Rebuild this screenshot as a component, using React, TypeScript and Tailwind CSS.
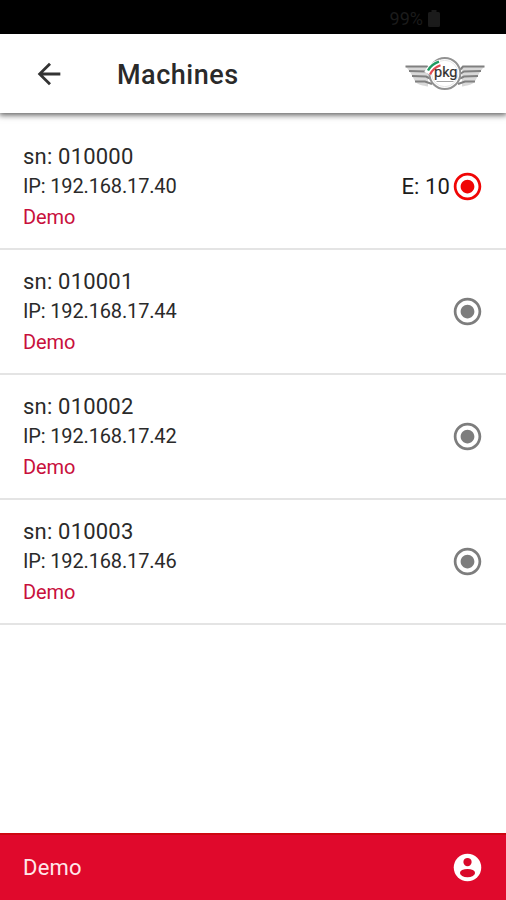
const machines = [
  { sn: "010000", ip: "192.168.17.40", owner: "Demo", error: "10" },
  { sn: "010001", ip: "192.168.17.44", owner: "Demo" },
  { sn: "010002", ip: "192.168.17.42", owner: "Demo" },
  { sn: "010003", ip: "192.168.17.46", owner: "Demo" },
];

function Logo() {
  return (
    <svg className="block" width="80" height="36" viewBox="0 0 80 36" fill="none">
      <path d="M0.500 10.500H23V30.500C18 29.500 13 29 10.500 26C8 22 6 16 0.500 10.500Z" fill="#d8d8d8" />
      <path d="M79.500 10.500H57V30.500C62 29.500 67 29 69.500 26C72 22 74 16 79.500 10.500Z" fill="#d8d8d8" />
      <path
        d="M0.500 10.500H22L25 14M4 15L21 15.500L25 18M7 20L21 20.500L25 22.500M10 25.500L20 25.500L27 28M79.500 10.500H58L55 14M76 15L59 15.500L55 18M73 20L59 20.500L55 22.500M70 25.500L60 25.500L53 28"
        stroke="#808080"
        strokeWidth="2"
      />
      <circle cx="39.800" cy="17.500" r="15.500" fill="#fff" stroke="#929292" strokeWidth="2" />
      <circle cx="39.800" cy="17.500" r="13.200" stroke="#dedede" strokeWidth="0.800" />
      <path d="M22.500 17.500C25.500 11 29.500 8.500 35.500 7" stroke="#fff" strokeWidth="7" />
      <path d="M23 14.500C25.500 10 28.500 7.500 34 5.700" stroke="#1f9a61" strokeWidth="2.400" />
      <path d="M25 18.500C27.500 13.500 30.500 11 35.500 9.300" stroke="#e04a52" strokeWidth="2.200" />
      <text x="29" y="20.500" fontSize="14" fill="#303030" stroke="#303030" strokeWidth="0.200" textLength="23.500" lengthAdjust="spacingAndGlyphs">
        pkg
      </text>
      <path d="M31.500 25.500H48.500" stroke="#a5a5a5" strokeWidth="1" />
    </svg>
  );
}

function StatusBar() {
  return (
    <div className="flex h-[34px] shrink-0 items-center justify-end bg-black pt-[3px] pr-[66px] text-[#1b1b1b]">
      <span className="text-[18px] leading-none">99%</span>
      <svg className="ml-[5px]" width="12" height="17" viewBox="0 0 12 17" fill="currentColor">
        <path d="M3.500 0H8.500V2H10.500Q12 2 12 3.500V15.500Q12 17 10.500 17H1.500Q0 17 0 15.500V3.500Q0 2 1.500 2H3.500Z" />
      </svg>
    </div>
  );
}

function RadioIcon({ className }: { className: string }) {
  return (
    <svg className={className} width="33" height="33" viewBox="0 0 24 24" fill="currentColor">
      <path d="M12 7c-2.760 0-5 2.240-5 5s2.240 5 5 5 5-2.240 5-5-2.240-5-5-5zm0-5C6.480 2 2 6.480 2 12s4.480 10 10 10 10-4.480 10-10S17.520 2 12 2zm0 18c-4.420 0-8-3.580-8-8s3.580-8 8-8 8 3.580 8 8-3.580 8-8 8z" />
    </svg>
  );
}

function MachineRow({ machine }: { machine: any }) {
  const { sn, ip, owner, error } = machine;

  return (
    <li className="flex h-[125px] items-center justify-between border-b-2 border-[#e4e4e4] pr-[22px] pl-[23px]">
      <div className="pt-px">
        <p className="text-[22px] leading-[29px] tracking-[0.2px] text-[#2a2a2a]">sn: {sn}</p>
        <p className="text-[20px] leading-[30px] tracking-[-0.15px] text-[#2a2a2a]">IP: {ip}</p>
        <p className="text-[20px] leading-[32px] tracking-[-0.1px] text-[#c8103c]">{owner}</p>
      </div>
      <div className="flex items-center">
        {error && <span className="mr-px text-[22px] leading-none tracking-[0.1px] text-[#1c1c1c]">E: {error}</span>}
        <RadioIcon className={error ? "text-[#f00505]" : "text-[#7d7d7d]"} />
      </div>
    </li>
  );
}

export default function App() {
  return (
    <div className="flex h-screen flex-col overflow-hidden bg-white font-['Roboto',sans-serif]">
      <StatusBar />
      <header className="z-10 flex h-[79px] shrink-0 items-center bg-white pt-px pr-[21px] pl-[32px] shadow-[0_1px_6px_1px_rgba(0,0,0,0.65)]">
        <svg width="34" height="34" viewBox="0 0 24 24" fill="#333">
          <path d="M20 11H7.830l5.590-5.590L12 4l-8 8 8 8 1.410-1.410L7.830 13H20v-2z" />
        </svg>
        <h1 className="ml-[51px] flex-1 pt-[2px] text-[27px] leading-none font-medium tracking-[0.5px] text-[#2a2a2a]">
          Machines
        </h1>
        <Logo />
      </header>

      <ul className="flex-1 pt-[12px]">
        {machines.map((machine) => (
          <MachineRow key={machine.sn} machine={machine} />
        ))}
      </ul>

      <footer className="flex h-[67px] shrink-0 items-center justify-between border-t-2 border-[#cd0712] bg-[#e0092c] pr-[22px] pl-[23px]">
        <span className="text-[22px] leading-none tracking-[0.2px] text-[#ffe6ea]">Demo</span>
        <svg width="33" height="33" viewBox="0 0 24 24">
          <circle cx="12" cy="12" r="10" fill="#fff" />
          <circle cx="12" cy="8" r="3" fill="#d9082a" />
          <ellipse cx="12" cy="16" rx="5.500" ry="3" fill="#d9082a" />
        </svg>
      </footer>
    </div>
  );
}
